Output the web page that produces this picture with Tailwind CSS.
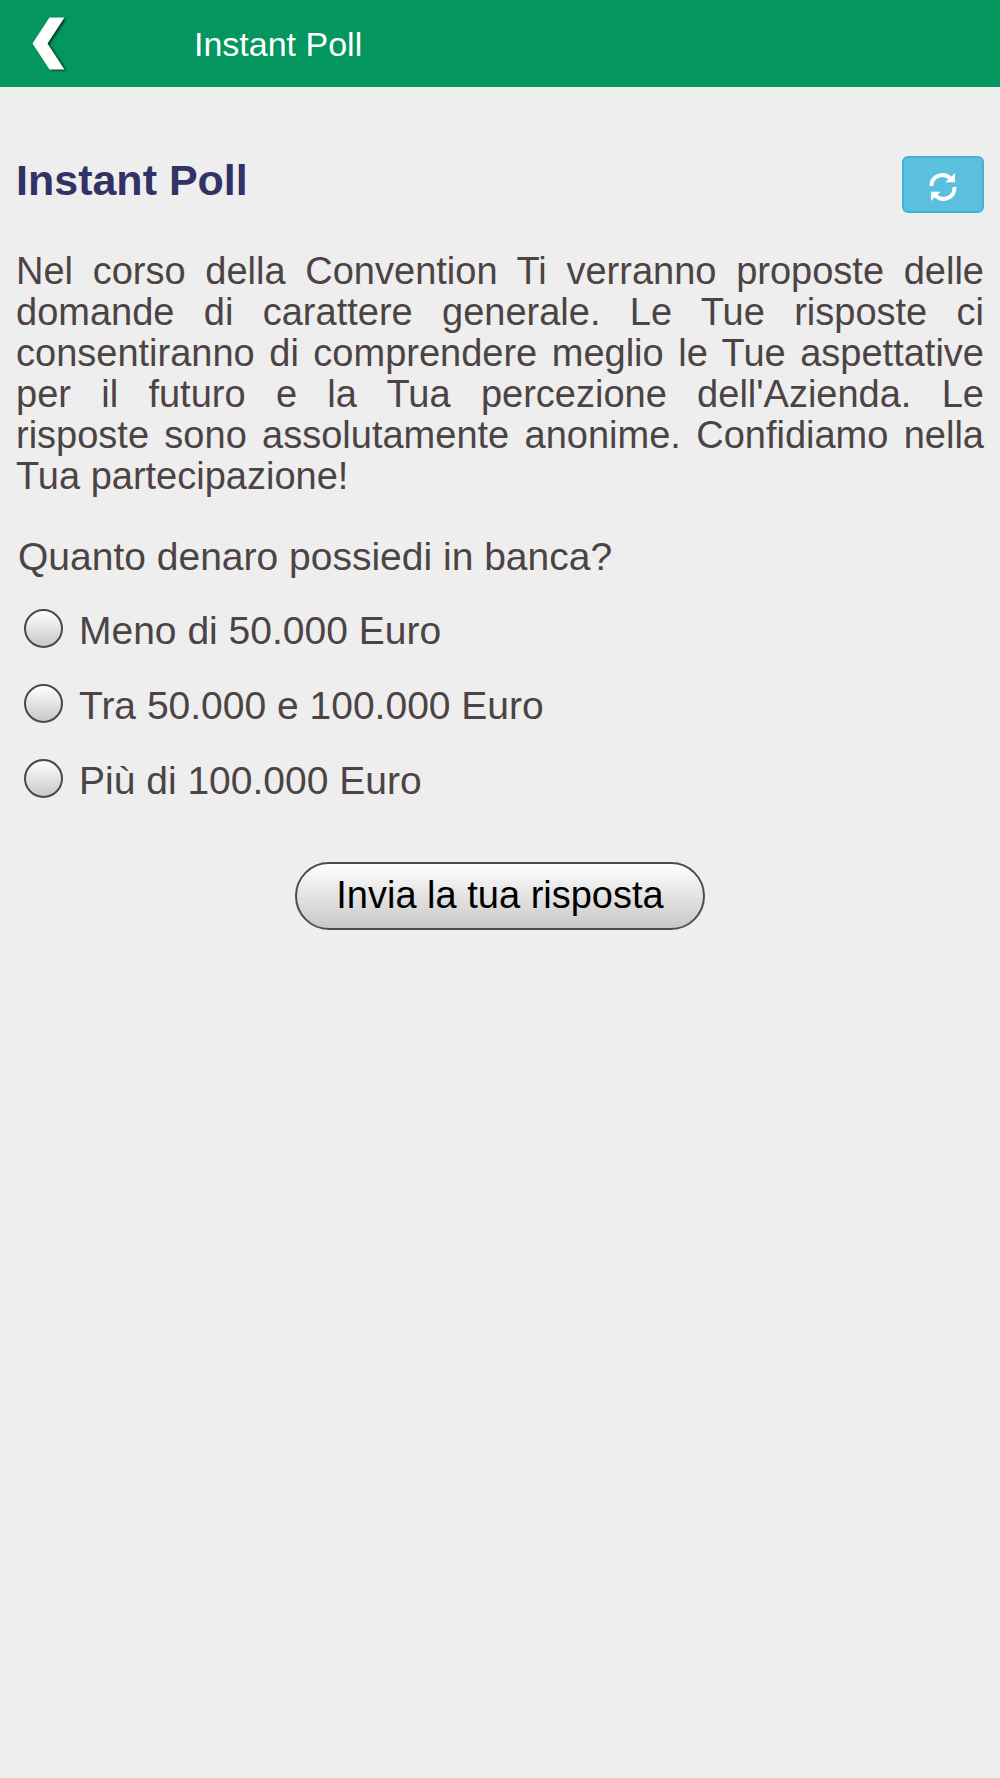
<!DOCTYPE html>
<html lang="it">
<head>
<meta charset="utf-8">
<meta name="viewport" content="width=device-width, initial-scale=1">
<title>Instant Poll</title>
<script src="https://cdn.jsdelivr.net/npm/@tailwindcss/browser@4"></script>
</head>
<body class="min-h-screen bg-[#eeeeee] font-['Liberation_Sans',Arial,sans-serif] text-[38px] leading-[41px] text-[#4c4444]">
  <header class="flex h-[87px] items-center bg-[#03965e] text-white">
    <a href="#" aria-label="Indietro" class="ml-8 block">
      <svg class="block h-[53px] w-9 overflow-visible drop-shadow-[2px_1px_1px_rgba(0,0,0,0.6)]" viewBox="0 0 36 53" fill="currentColor" aria-hidden="true"><path d="M17.500 .5H32.500L15.500 26.500L32.500 52.500H17.500L.5 26.500Z"/></svg>
    </a>
    <span class="ml-[126px] pt-0.5 text-[34px]">Instant Poll</span>
  </header>
  <main class="px-4 pt-[69px]">
    <div class="flex items-start justify-between">
      <h1 class="text-[43px] leading-[48px] font-bold text-[#333266]">Instant Poll</h1>
      <button type="button" aria-label="Aggiorna" class="flex h-[57px] w-[82px] items-center justify-center rounded-md border-2 border-[#40b4d8] bg-[#5bc0de] pt-1 text-white">
        <svg class="size-7" viewBox="0 0 28 29" aria-hidden="true">
          <path d="M2 13.500C2 2.500 15 -1.500 22 6" fill="none" stroke="currentColor" stroke-width="4"/>
          <path d="M26.500 0V9.500H16.500Z" fill="currentColor"/>
          <path d="M26 14.500C26 26.500 13 30.500 6 23" fill="none" stroke="currentColor" stroke-width="4"/>
          <path d="M1.500 29V19.500H11.500Z" fill="currentColor"/>
        </svg>
      </button>
    </div>
    <p class="mt-[38px] text-justify">Nel corso della Convention Ti verranno proposte delle domande di carattere generale. Le Tue risposte ci consentiranno di comprendere meglio le Tue aspettative per il futuro e la Tua percezione dell'Azienda. Le risposte&nbsp;sono assolutamente anonime. Confidiamo nella Tua&nbsp;partecipazione!</p>
    <form class="mt-[39px]">
      <fieldset class="px-0.5 text-[39px]">
        <legend class="mb-4">Quanto denaro possiedi in banca?</legend>
        <label class="flex h-[75px] items-center gap-4 pl-1.5"><input type="radio" name="denaro" value="1" class="mb-1 size-[39px] shrink-0 appearance-none rounded-full border-2 border-[#4a4848] bg-linear-to-b from-white to-[#c8c8c8] checked:border-8"><span>Meno di 50.000 Euro</span></label>
        <label class="flex h-[75px] items-center gap-4 pl-1.5"><input type="radio" name="denaro" value="2" class="mb-1 size-[39px] shrink-0 appearance-none rounded-full border-2 border-[#4a4848] bg-linear-to-b from-white to-[#c8c8c8] checked:border-8"><span>Tra 50.000 e 100.000 Euro</span></label>
        <label class="flex h-[75px] items-center gap-4 pl-1.5"><input type="radio" name="denaro" value="3" class="mb-1 size-[39px] shrink-0 appearance-none rounded-full border-2 border-[#4a4848] bg-linear-to-b from-white to-[#c8c8c8] checked:border-8"><span>Più di 100.000 Euro</span></label>
      </fieldset>
      <button type="submit" class="mx-auto mt-11 block h-[68px] w-[410px] rounded-full border-2 border-[#4c4c4c] bg-linear-to-b from-white to-[#c8c8c8] pb-0.5 text-black">Invia la tua risposta</button>
    </form>
  </main>
</body>
</html>
